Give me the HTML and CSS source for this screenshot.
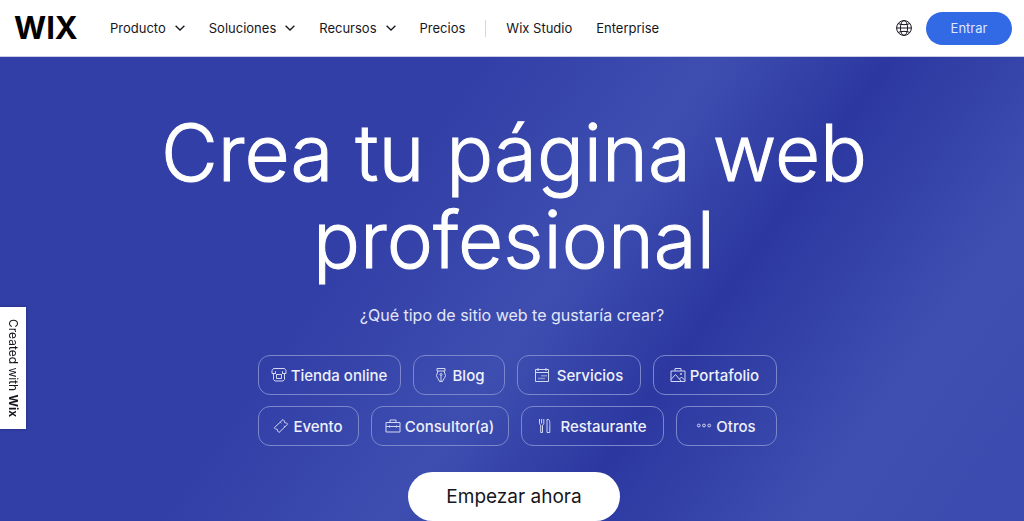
FILE: index.html
```html
<!DOCTYPE html>
<html lang="es">
<head>
    <meta charset="UTF-8">
    <meta name="viewport" content="width=device-width, initial-scale=1.0">
    <title>Crea tu página web profesional | Wix</title>
    <link rel="stylesheet" href="styles.css">
</head>
<body>
    <header class="header">
        <a href="#" class="logo">WIX</a>
        <nav class="nav">
            <button type="button" class="nav-item">Producto
                <svg class="chevron" viewBox="0 0 10 6"><path d="M0.6 0.7 5 5 9.4 0.7"/></svg>
            </button>
            <button type="button" class="nav-item">Soluciones
                <svg class="chevron" viewBox="0 0 10 6"><path d="M0.6 0.7 5 5 9.4 0.7"/></svg>
            </button>
            <button type="button" class="nav-item">Recursos
                <svg class="chevron" viewBox="0 0 10 6"><path d="M0.6 0.7 5 5 9.4 0.7"/></svg>
            </button>
            <a href="#" class="nav-item">Precios</a>
            <span class="divider"></span>
            <a href="#" class="nav-item">Wix Studio</a>
            <a href="#" class="nav-item">Enterprise</a>
        </nav>
        <button type="button" class="language" aria-label="Idioma">
            <svg viewBox="0 0 16 16">
                <circle cx="8" cy="8" r="7.4"/>
                <ellipse cx="8" cy="8" rx="3.6" ry="7.4"/>
                <path d="M0.6 8H15.4M2.2 3.6C5 5 11 5 13.8 3.6M2.2 12.4C5 11 11 11 13.8 12.4"/>
            </svg>
        </button>
        <a href="#" class="login">Entrar</a>
    </header>

    <main class="hero">
        <h1>Crea tu página web profesional</h1>
        <p class="question">¿Qué tipo de sitio web te gustaría crear?</p>

        <div class="chips">
            <div class="chip-row">
                <button type="button" class="chip chip-xl">
                    <svg viewBox="0 0 16 16"><path d="M2.5 1.5H13.5L15 3.5V6.5H11.5V4.5V6.5L10.5 7.5H5.5L4.5 6.5V4.5V6.5H1V3.5ZM2.5 6.5V12.5L4 14H12L13.5 12.5V6.5M5.5 7.5V11.5H10.5V7.5"/></svg>
                    Tienda online
                </button>
                <button type="button" class="chip chip-xs">
                    <svg viewBox="0 0 16 16"><path d="M4 1.5H12V4H4ZM5 4 3.5 8.5C4 11 6 12.5 6.5 14.5H9.5C10 12.5 12 11 12.5 8.5L11 4M8 14V8.5"/><circle cx="8" cy="7.5" r="1"/></svg>
                    Blog
                </button>
                <button type="button" class="chip chip-m chip-spaced">
                    <svg viewBox="0 0 16 16"><path d="M1.5 2.5H14.5V14.5H1.5ZM1.5 5.5H14.5M4 1V4M12 1V4"/><path class="dots" d="M7.5 8.7H12.5M4.5 11.5H11"/></svg>
                    Servicios
                </button>
                <button type="button" class="chip chip-m">
                    <svg viewBox="0 0 16 16"><path d="M1 4H15V14.5H1ZM5 4V1.5H11V4M1 12.5 5.5 7.5 11.5 14.5M9.5 12 11.5 10 15 13.5"/><circle cx="11" cy="7" r="0.6"/></svg>
                    Portafolio
                </button>
            </div>
            <div class="chip-row">
                <button type="button" class="chip chip-s">
                    <svg viewBox="0 0 16 16"><path d="M10 1.5 11.5 3C10.8 4.3 11.9 5.3 13.2 4.7L14.7 6.2 6 14.5 4.5 13C5.2 11.7 4.1 10.6 2.8 11.3L1.3 9.8ZM7.3 4.3 8.3 5.3M10.8 7.8 11.8 8.8"/></svg>
                    Evento
                </button>
                <button type="button" class="chip chip-l">
                    <svg viewBox="0 0 16 16"><path d="M1 4.5H15V14H1ZM5 4.5V2H11V4.5M1 8.5H15M4.5 7.5V9.5M11.5 7.5V9.5"/></svg>
                    Consultor(a)
                </button>
                <button type="button" class="chip chip-xl chip-spaced">
                    <svg viewBox="0 0 16 16"><path d="M2.5 1V5.5C2.5 6.5 3.2 7 3.7 7.2V14.5H5.5V7.2C6 7 6.8 6.5 6.8 5.5V1M4.6 1V5.5M10 1.5H11.5C13 2 13 6 12.8 9V14.5H10Z"/></svg>
                    Restaurante
                </button>
                <button type="button" class="chip chip-s">
                    <svg viewBox="0 0 16 16"><circle cx="2.8" cy="7.5" r="1.4"/><circle cx="8" cy="7.5" r="1.4"/><circle cx="13.2" cy="7.5" r="1.4"/></svg>
                    Otros
                </button>
            </div>
        </div>

        <a href="#" class="start">Empezar ahora</a>
    </main>

    <a href="#" class="created">Created with <b>Wix</b></a>
</body>
</html>
```

FILE: styles.css
```css
* {
    box-sizing: border-box;
}

body {
    margin: 0;
    min-height: 100vh;
    display: flex;
    flex-direction: column;
    overflow: hidden;
    font-family: Inter, "Open Sans", sans-serif;
    color: #16161d;
}

a {
    color: inherit;
    text-decoration: none;
}

button {
    padding: 0;
    border: none;
    background: none;
    color: inherit;
    font: inherit;
    cursor: pointer;
}

svg {
    fill: none;
    stroke: currentColor;
}

.header {
    display: flex;
    align-items: center;
    height: 57px;
    padding: 0 12px 0 14px;
    background-color: #fff;
    border-bottom: 1px solid #c9cdea;
}

.logo {
    width: 96px;
    font-size: 31px;
    font-weight: 700;
    line-height: 40px;
    color: #000;
}

.nav {
    display: flex;
    align-items: center;
    gap: 24px;
    flex: 1;
    font-size: 13px;
    line-height: 20px;
}

.nav-item {
    display: flex;
    align-items: center;
    gap: 9px;
    white-space: nowrap;
}

.chevron {
    width: 10px;
    height: 6px;
    stroke-width: 1.3;
}

.divider {
    width: 1px;
    height: 17px;
    margin: 0 -4px;
    background-color: #d5d7e2;
}

.language {
    width: 16px;
    height: 16px;
    margin-right: 14px;
}

.language svg {
    display: block;
}

.login {
    width: 86px;
    border-radius: 17px;
    background-color: #3269e4;
    color: #dfe8fc;
    font-size: 13px;
    line-height: 33px;
    text-align: center;
}

.hero {
    flex: 1;
    display: flex;
    flex-direction: column;
    align-items: center;
    padding: 52px 0 0 4px;
    color: #fff;
    background: linear-gradient(125deg, #323fa7 0%, #323fa7 36%, #3e4eb0 53%, #2c38a0 66%, #3e4fb1 84%, #3a4aae 100%);
}

h1 {
    max-width: 800px;
    margin: 0;
    font-size: 78px;
    font-weight: 300;
    line-height: 87px;
    text-align: center;
    -webkit-text-stroke: 1px #fff;
}

.question {
    margin: 20px 0 28px;
    padding-right: 4px;
    color: #e4e7f8;
    font-size: 16px;
    line-height: 24px;
}

.chips {
    display: flex;
    flex-direction: column;
    gap: 11px;
    padding-left: 6px;
}

.chip-row {
    display: flex;
    justify-content: center;
    gap: 12px;
}

.chip {
    display: flex;
    align-items: center;
    justify-content: center;
    gap: 4px;
    height: 40px;
    border: 1px solid #7c87cb;
    border-radius: 12px;
    color: #eef0fb;
    font-size: 15px;
    font-weight: 500;
    white-space: nowrap;
}

.chip svg {
    width: 16px;
    height: 16px;
    stroke: #d3d8f2;
}

.chip .dots {
    stroke-dasharray: 1 1;
    stroke-width: 1.6;
}

.chip-spaced {
    gap: 7px;
}

.chip-xs {
    width: 92px;
}

.chip-s {
    width: 101px;
}

.chip-m {
    width: 124px;
}

.chip-l {
    width: 138px;
}

.chip-xl {
    width: 143px;
}

.start {
    margin-top: 26px;
    padding: 0 38px;
    border-radius: 25px;
    background-color: #fff;
    color: #16161d;
    font-size: 19px;
    line-height: 49px;
}

.created {
    position: fixed;
    left: 0;
    top: 307px;
    padding: 12px 6px;
    background-color: #fff;
    box-shadow: 0 0 3px rgba(0, 0, 0, 0.3);
    font-size: 12px;
    line-height: 14px;
    writing-mode: vertical-rl;
}
```
